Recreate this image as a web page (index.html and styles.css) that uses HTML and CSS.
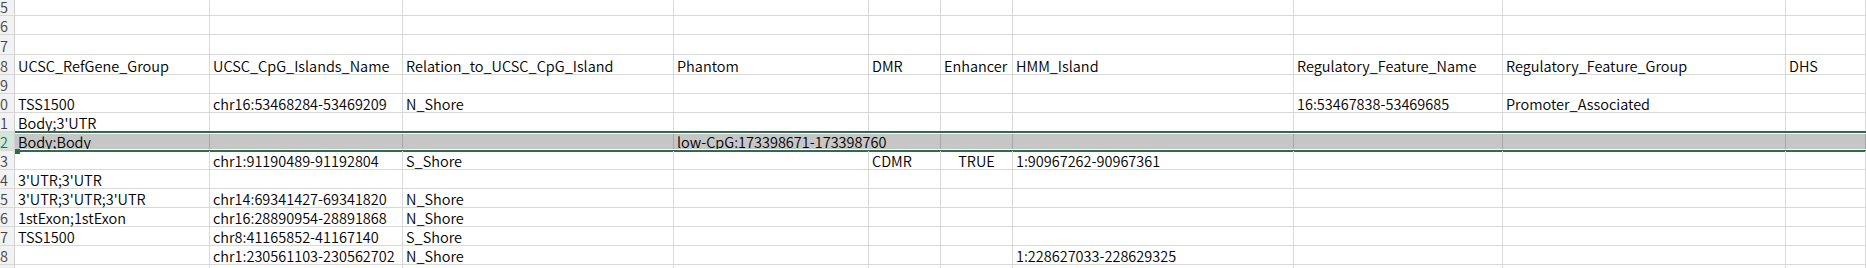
FILE: index.html
```html
<!DOCTYPE html>
<html lang="en">
<head>
<meta charset="utf-8">
<title>Sheet</title>
<link rel="stylesheet" href="styles.css">
</head>
<body>
<div class="sheet">
  <div class="row h16"><div class="rh">5</div><div class="c"></div><div class="c"></div><div class="c"></div><div class="c"></div><div class="c"></div><div class="c"></div><div class="c"></div><div class="c"></div><div class="c"></div><div class="c"></div></div>
  <div class="row"><div class="rh">6</div><div class="c"></div><div class="c"></div><div class="c"></div><div class="c"></div><div class="c"></div><div class="c"></div><div class="c"></div><div class="c"></div><div class="c"></div><div class="c"></div></div>
  <div class="row h20"><div class="rh">7</div><div class="c"></div><div class="c"></div><div class="c"></div><div class="c"></div><div class="c"></div><div class="c"></div><div class="c"></div><div class="c"></div><div class="c"></div><div class="c"></div></div>
  <div class="row h20"><div class="rh">8</div><div class="c">UCSC_RefGene_Group</div><div class="c">UCSC_CpG_Islands_Name</div><div class="c">Relation_to_UCSC_CpG_Island</div><div class="c">Phantom</div><div class="c">DMR</div><div class="c">Enhancer</div><div class="c">HMM_Island</div><div class="c">Regulatory_Feature_Name</div><div class="c">Regulatory_Feature_Group</div><div class="c">DHS</div></div>
  <div class="row"><div class="rh">9</div><div class="c"></div><div class="c"></div><div class="c"></div><div class="c"></div><div class="c"></div><div class="c"></div><div class="c"></div><div class="c"></div><div class="c"></div><div class="c"></div></div>
  <div class="row"><div class="rh">0</div><div class="c">TSS1500</div><div class="c">chr16:53468284-53469209</div><div class="c">N_Shore</div><div class="c"></div><div class="c"></div><div class="c"></div><div class="c"></div><div class="c">16:53467838-53469685</div><div class="c">Promoter_Associated</div><div class="c"></div></div>
  <div class="row"><div class="rh">1</div><div class="c">Body;3'UTR</div><div class="c"></div><div class="c"></div><div class="c"></div><div class="c"></div><div class="c"></div><div class="c"></div><div class="c"></div><div class="c"></div><div class="c"></div></div>
  <div class="row selected"><div class="rh">2</div><div class="c">Body;Body</div><div class="c"></div><div class="c"></div><div class="c span2">low-CpG:173398671-173398760</div><div class="c"></div><div class="c"></div><div class="c"></div><div class="c"></div><div class="c"></div><span class="fill-handle"></span></div>
  <div class="row"><div class="rh">3</div><div class="c"></div><div class="c">chr1:91190489-91192804</div><div class="c">S_Shore</div><div class="c"></div><div class="c">CDMR</div><div class="c center">TRUE</div><div class="c">1:90967262-90967361</div><div class="c"></div><div class="c"></div><div class="c"></div></div>
  <div class="row"><div class="rh">4</div><div class="c">3'UTR;3'UTR</div><div class="c"></div><div class="c"></div><div class="c"></div><div class="c"></div><div class="c"></div><div class="c"></div><div class="c"></div><div class="c"></div><div class="c"></div></div>
  <div class="row"><div class="rh">5</div><div class="c">3'UTR;3'UTR;3'UTR</div><div class="c">chr14:69341427-69341820</div><div class="c">N_Shore</div><div class="c"></div><div class="c"></div><div class="c"></div><div class="c"></div><div class="c"></div><div class="c"></div><div class="c"></div></div>
  <div class="row"><div class="rh">6</div><div class="c">1stExon;1stExon</div><div class="c">chr16:28890954-28891868</div><div class="c">N_Shore</div><div class="c"></div><div class="c"></div><div class="c"></div><div class="c"></div><div class="c"></div><div class="c"></div><div class="c"></div></div>
  <div class="row"><div class="rh">7</div><div class="c">TSS1500</div><div class="c">chr8:41165852-41167140</div><div class="c">S_Shore</div><div class="c"></div><div class="c"></div><div class="c"></div><div class="c"></div><div class="c"></div><div class="c"></div><div class="c"></div></div>
  <div class="row"><div class="rh">8</div><div class="c"></div><div class="c">chr1:230561103-230562702</div><div class="c">N_Shore</div><div class="c"></div><div class="c"></div><div class="c"></div><div class="c">1:228627033-228629325</div><div class="c"></div><div class="c"></div><div class="c"></div></div>
  <div class="row"><div class="rh"></div><div class="c"></div><div class="c"></div><div class="c"></div><div class="c"></div><div class="c"></div><div class="c"></div><div class="c"></div><div class="c"></div><div class="c"></div><div class="c"></div></div>
</div>
</body>
</html>
```

FILE: styles.css
```css
html, body {
  margin: 0;
  padding: 0;
  background: #ffffff;
  overflow: hidden;
}

.sheet {
  width: 1866px;
  height: 268px;
  overflow: hidden;
  font-family: "Noto Sans CJK SC", "Noto Sans", sans-serif;
  font-weight: 350;
  font-size: 14.5px;
  color: #000000;
}

.row {
  display: grid;
  grid-template-columns: 15px 195px 193px 271px 195px 72px 72px 281px 209px 283px 1fr;
  height: 19px;
  position: relative;
}

.row.h16 { height: 16px; }
.row.h20 { height: 20px; }

.rh {
  box-sizing: border-box;
  background: #f2f2f2;
  border-right: 1px solid #d0d0d0;
  border-bottom: 1px solid #d9d9d9;
  color: #444444;
  padding-left: 0;
  line-height: 17px;
  display: flex;
  align-items: flex-end;
  overflow: hidden;
  white-space: nowrap;
}

.c {
  box-sizing: border-box;
  border-right: 1px solid #d9d9d9;
  border-bottom: 1px solid #d9d9d9;
  padding: 0 3px 0 3px;
  line-height: 17px;
  display: flex;
  align-items: flex-end;
  white-space: nowrap;
  overflow: visible;
}

.c.center { justify-content: center; }

.c.span2 { grid-column: span 2; }

.selected .c {
  background: #c6c6c6;
  border-right-color: #a8a8a8;
}

.selected .rh {
  background: #d3e5d9;
  color: #217346;
}

.selected::after {
  content: "";
  position: absolute;
  left: 15px;
  right: 0;
  top: -1px;
  bottom: -1px;
  border-top: 2px solid #2f6b4c;
  border-bottom: 2px solid #2f6b4c;
  box-shadow: inset 0 1px 0 #ffffff, inset 0 -1px 0 #ffffff;
  pointer-events: none;
}

.fill-handle {
  position: absolute;
  left: 15px;
  bottom: -3px;
  width: 5px;
  height: 5px;
  background: #2f6b4c;
  z-index: 2;
}
```
